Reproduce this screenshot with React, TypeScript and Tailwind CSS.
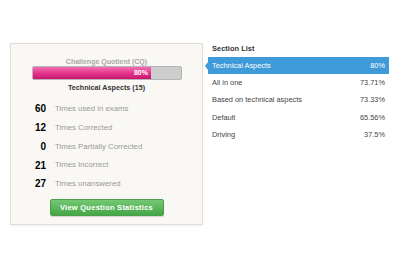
const stats = [
  { n: 60, label: "Times used in exams" },
  { n: 12, label: "Times Corrected" },
  { n: 0, label: "Times Partially Corrected" },
  { n: 21, label: "Times Incorrect" },
  { n: 27, label: "Times unanswered" },
];

const sections = [
  { name: "Technical Aspects", pct: "80%", active: true },
  { name: "All in one", pct: "73.71%" },
  { name: "Based on technical aspects", pct: "73.33%" },
  { name: "Default", pct: "65.56%" },
  { name: "Driving", pct: "37.5%" },
];

export default function App() {
  return (
    <div className="flex h-[271px] w-[400px] items-start bg-white pt-[43px] pl-[10px] font-['Liberation_Sans',Arial,sans-serif]">
      {/* Question summary card */}
      <div className="flex h-[182px] w-[193px] flex-col items-center border border-[#e2ded7] bg-[#faf8f5] pt-[13px] shadow-[0_1px_2px_rgba(0,0,0,0.06)]">
        <div className="text-[7px] leading-[9px] font-bold text-[#a8a8a8]">Challenge Quotient (CQ)</div>
        <div className="flex h-[14px] w-[150px] overflow-hidden rounded-[2px] border border-[#b5b5b5] bg-[#cdcdcd]">
          <div className="flex h-full w-[80%] items-center justify-end bg-gradient-to-b from-[#f36cb3] via-[#e3358c] to-[#c9136f] pr-[3px] text-[7px] font-bold text-white">
            80%
          </div>
        </div>
        <div className="mt-[3px] text-[7.2px] leading-[10px] font-bold text-[#333]">Technical Aspects (15)</div>

        <div className="mt-[6.5px] flex w-full flex-col">
          {stats.map((s) => (
            <div key={s.label} className="flex h-[18.75px] items-center">
              <span className="w-[35px] text-right text-[10px] font-bold text-black">{s.n}</span>
              <span className="ml-[9px] text-[7.8px] text-[#999]">{s.label}</span>
            </div>
          ))}
        </div>

        <button className="mt-[5.5px] h-[17px] w-[114px] rounded-[2px] border border-[#4a9f4a] bg-gradient-to-b from-[#74c874] to-[#45a645] text-[7.5px] font-bold tracking-[0.25px] text-white shadow-[0_1px_1px_rgba(0,0,0,0.15)]">
          View Question Statistics
        </button>
      </div>

      {/* Section list */}
      <div className="w-[189px] pt-[1px]">
        <div className="pl-[9px] text-[7.5px] leading-[10px] font-bold text-[#333]">Section List</div>
        <div className="mt-[3px] flex flex-col">
          {sections.map((s) => (
            <div
              key={s.name}
              className={`relative ml-[5px] flex w-[181px] items-center justify-between pr-[4px] pl-[4px] text-[7.4px] ${
                s.active ? "h-[17px] bg-[#3e9ad8] text-white" : "h-[17.3px] text-[#444]"
              }`}
            >
              {s.active && (
                <span className="absolute top-[4.5px] left-[-3px] h-0 w-0 border-y-[4px] border-r-[3px] border-y-transparent border-r-[#3e9ad8]" />
              )}
              <span>{s.name}</span>
              <span>{s.pct}</span>
            </div>
          ))}
        </div>
      </div>
    </div>
  );
}
